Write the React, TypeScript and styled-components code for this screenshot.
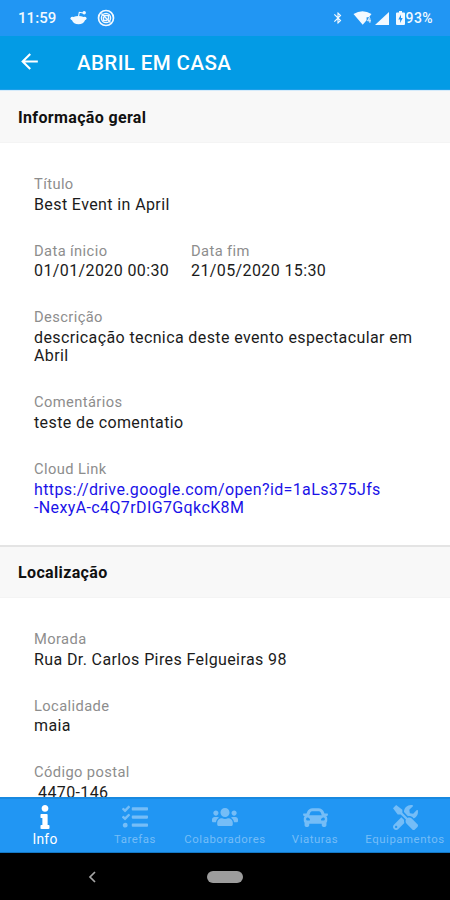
import React from 'react';
import styled, { createGlobalStyle } from 'styled-components';
import { FaCar, FaInfo, FaTasks, FaTools, FaUsers } from 'react-icons/fa';
import { MdArrowBack, MdBluetooth } from 'react-icons/md';

const GlobalStyle = createGlobalStyle`
  * { box-sizing: border-box; }
  body { margin: 0; font-family: Roboto, 'Liberation Sans', sans-serif; background: #fff; }
`;

const Screen = styled.div`
  width: 450px;
  height: 900px;
  display: flex;
  flex-direction: column;
  overflow: hidden;
  background: #fff;
`;

const StatusBar = styled.div`
  height: 36px;
  flex: none;
  display: flex;
  align-items: center;
  padding: 0 17px 0 18px;
  background: #2196f3;
  color: #f2f9ff;
`;

const Clock = styled.span`
  width: 52px;
  font-size: 15px;
  font-weight: 500;
  letter-spacing: 0.05px;
`;

const Notifications = styled.div`
  display: flex;
  align-items: center;
  gap: 10px;
  flex: 1;
`;

const SystemIcons = styled.div`
  display: flex;
  align-items: center;
`;

const Glyph = styled.svg<{ $gap?: number }>`
  display: block;
  flex: none;
  margin-left: ${(p) => p.$gap ?? 0}px;
`;

const BatteryLevel = styled.span`
  margin-left: 1px;
  font-size: 14px;
  font-weight: 500;
  letter-spacing: 0.4px;
`;

const AppBar = styled.header`
  height: 54px;
  flex: none;
  display: flex;
  align-items: center;
  padding-left: 17px;
  background: #039be5;
  border-bottom: 1px solid #1e9fe9;
  color: #fff;
`;

const BackButton = styled.button`
  width: 60px;
  padding: 0 0 2px;
  border: 0;
  background: none;
  color: #fff;
  display: flex;
`;

const Title = styled.h1`
  margin: 1px 0 0;
  font-size: 20.5px;
  font-weight: 500;
  letter-spacing: 0.4px;
`;

const Content = styled.main`
  flex: 1;
  min-height: 0;
  overflow: hidden;
`;

const SectionHeader = styled.h2<{ $divided?: boolean }>`
  height: 53px;
  margin: 0;
  padding: 1px 18px 0;
  display: flex;
  align-items: center;
  background: #f8f8f8;
  border-top: ${(p) => (p.$divided ? '2px solid #e4e4e4' : '1px solid #d5ebfb')};
  border-bottom: 1px solid #f4f4f4;
  color: #111;
  font-size: 16px;
  font-weight: 700;
  letter-spacing: 0.35px;
`;

const SectionBody = styled.section<{ $height?: number }>`
  height: ${(p) => (p.$height ? `${p.$height}px` : 'auto')};
  padding: 31px 34px 0;
  display: flex;
  flex-direction: column;
  gap: 26.4px;
`;

const FieldRow = styled.div`
  display: grid;
  grid-template-columns: 157px 1fr;
`;

const Label = styled.div`
  height: 21.7px;
  line-height: 20px;
  font-size: 14.7px;
  letter-spacing: 0.4px;
  color: #8d8d8d;
`;

const Value = styled.div<{ $indent?: boolean; $link?: boolean }>`
  padding-left: ${(p) => (p.$indent ? 4 : 0)}px;
  line-height: 18.5px;
  font-size: 16px;
  letter-spacing: ${(p) => (p.$link ? 0.38 : 0.39)}px;
  color: ${(p) => (p.$link ? '#1a12e8' : '#1b1b1b')};
  white-space: pre;
`;

const TabBar = styled.nav`
  height: 56px;
  flex: none;
  display: grid;
  grid-template-columns: repeat(5, 90px);
  background: #2196f3;
  border-top: 2px solid #1889e0;
  border-bottom: 1px solid #1477c4;
`;

const Tab = styled.div<{ $active?: boolean }>`
  display: flex;
  flex-direction: column;
  align-items: center;
  padding-top: 5px;
  white-space: nowrap;
  color: ${(p) => (p.$active ? '#fff' : '#75bdf7')};
  font-size: ${(p) => (p.$active ? 13.8 : 11.4)}px;
  letter-spacing: ${(p) => (p.$active ? 0.3 : 0.55)}px;
  font-weight: 400;
`;

const TabIcon = styled.div`
  height: 26px;
  display: flex;
  align-items: center;
  justify-content: center;
`;

const TabLabel = styled.span`
  line-height: 18px;
`;

const NavBar = styled.div`
  height: 47px;
  flex: none;
  display: grid;
  grid-template-columns: 184px 82px 184px;
  align-items: center;
  justify-items: center;
  background: #000;
`;

const HomePill = styled.div`
  width: 36px;
  height: 12px;
  border-radius: 6px;
  background: #9c9c9c;
`;

interface FieldProps {
  label: string;
  value: string;
  indent?: boolean;
  link?: boolean;
}

const Field = ({ label, value, indent, link }: FieldProps) => (
  <div>
    <Label>{label}</Label>
    <Value $indent={indent} $link={link}>{value}</Value>
  </div>
);

const tabs = [
  { label: 'Info', icon: <FaInfo size={24} />, active: true },
  { label: 'Tarefas', icon: <FaTasks size={26} /> },
  { label: 'Colaboradores', icon: <FaUsers size={26} /> },
  { label: 'Viaturas', icon: <FaCar size={25} /> },
  { label: 'Equipamentos', icon: <FaTools size={25} /> },
];

export default function App() {
  return (
    <>
      <GlobalStyle />
      <Screen>
        <StatusBar>
          <Clock>11:59</Clock>
          <Notifications>
            <Glyph width="17" height="16" viewBox="0 0 17 16">
              <path d="M.3 8.2Q1.3 6.4 3.3 7Q8.5 4.8 13.7 7Q15.7 6.4 16.7 8.2Q16.5 9.7 15 10.3Q13.5 14.2 8.5 14.2Q3.5 14.2 2 10.3Q.5 9.7.3 8.2Z" fill="currentColor" />
              <path d="M8.5 6.4 9.3 2.3 13.4 3" fill="none" stroke="currentColor" strokeWidth="1.1" />
              <circle cx="14.2" cy="2.8" r="1.7" fill="currentColor" />
            </Glyph>
            <Glyph width="18" height="18" viewBox="0 0 18 18" fill="none" stroke="currentColor">
              <circle cx="9" cy="9" r="7.5" strokeWidth="1.7" />
              <circle cx="9" cy="9" r="4.6" strokeWidth="1.4" />
              <path d="M4.4 4.5 13.5 13.5M7 6.5h4.5v4M6.5 8v3.5H10" strokeWidth="1.4" />
            </Glyph>
          </Notifications>
          <SystemIcons>
            <MdBluetooth size={14} />
            <Glyph $gap={8} width="19" height="14" viewBox="0 0 19 14">
              <path d="M.5 3Q9.5-2.5 18.5 3L16 6.3H13.6V9.3L9.7 13.7Z" fill="currentColor" />
              <path d="m16.6 6.2-2 3.6h3.3M16.9 7.3v4.5" fill="none" stroke="currentColor" strokeWidth="1" />
            </Glyph>
            <Glyph $gap={3} width="14" height="13" viewBox="0 0 14 13">
              <path d="M14 0V13H0Z" fill="currentColor" />
            </Glyph>
            <Glyph $gap={7} width="9" height="14" viewBox="0 0 9 14">
              <path d="M3 0h3v1.5h2q1 0 1 1V13q0 1-1 1H1q-1 0-1-1V2.5q0-1 1-1h2Z" fill="currentColor" />
              <path d="M5 3.5 2.3 8.4h1.8V12L6.7 7H5Z" fill="#2196f3" />
            </Glyph>
            <BatteryLevel>93%</BatteryLevel>
          </SystemIcons>
        </StatusBar>

        <AppBar>
          <BackButton aria-label="Voltar">
            <MdArrowBack size={25} />
          </BackButton>
          <Title>ABRIL EM CASA</Title>
        </AppBar>

        <Content>
          <SectionHeader>Informação geral</SectionHeader>
          <SectionBody $height={402}>
            <Field label="Título" value="Best Event in April" />
            <FieldRow>
              <Field label="Data ínicio" value="01/01/2020 00:30" />
              <Field label="Data fim" value="21/05/2020 15:30" />
            </FieldRow>
            <Field label="Descrição" value={'descricação tecnica deste evento espectacular em\nAbril'} />
            <Field label="Comentários" value="teste de comentatio" />
            <Field
              link
              label="Cloud Link"
              value={'https://drive.google.com/open?id=1aLs375Jfs\n-NexyA-c4Q7rDIG7GqkcK8M'}
            />
          </SectionBody>
          <SectionHeader $divided>Localização</SectionHeader>
          <SectionBody>
            <Field label="Morada" value="Rua Dr. Carlos Pires Felgueiras 98" />
            <Field label="Localidade" value="maia" />
            <Field indent label="Código postal" value="4470-146" />
          </SectionBody>
        </Content>

        <TabBar>
          {tabs.map((tab) => (
            <Tab key={tab.label} $active={tab.active}>
              <TabIcon>{tab.icon}</TabIcon>
              <TabLabel>{tab.label}</TabLabel>
            </Tab>
          ))}
        </TabBar>

        <NavBar>
          <Glyph width="8" height="12" viewBox="0 0 8 12">
            <path d="M7 1 2 6l5 5" fill="none" stroke="#a6a6a6" strokeWidth="1.7" />
          </Glyph>
          <HomePill />
        </NavBar>
      </Screen>
    </>
  );
}
